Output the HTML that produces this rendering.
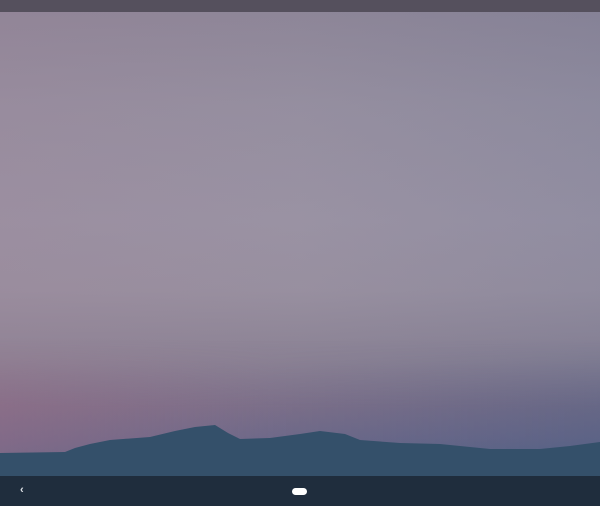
<!DOCTYPE html>
<html><head><meta charset="utf-8"><style>
html,body{margin:0;padding:0;width:600px;height:506px;overflow:hidden;background:#1f2d3d}
.top{position:absolute;left:0;top:0;width:600px;height:12px;background:#55505d}
.sky{position:absolute;left:0;top:12px;width:600px;height:464px;
background:
linear-gradient(90deg,rgba(160,130,150,0.25),rgba(150,130,150,0.05) 50%,rgba(80,100,140,0.12)),
linear-gradient(180deg,#8d8698 0%,#958fa0 20%,#9a93a4 45%,#9890a0 60%,#8a8294 75%,#7a6f88 85%,#6a6888 92%,#4f6284 100%);}
.bot{position:absolute;left:0;top:340px;width:600px;height:136px;
background:linear-gradient(90deg,rgba(150,100,130,0.35),rgba(120,100,140,0.1) 45%,rgba(70,90,130,0.3));
-webkit-mask-image:linear-gradient(180deg,transparent 0%,#000 50%,#000 100%);
mask-image:linear-gradient(180deg,transparent 0%,#000 50%,#000 100%);}
svg{position:absolute;left:0;top:0}
.nav{position:absolute;left:0;top:476px;width:600px;height:30px;background:#1f2d3d}
.pill{position:absolute;left:292px;top:488px;width:15px;height:7px;border-radius:4px;background:#fff}
.back{position:absolute;left:20px;top:484px;color:#dfe3e8;font:bold 11px "Liberation Sans",sans-serif}
</style></head><body>
<div class="top"></div>
<div class="sky"></div>
<div class="bot"></div>
<svg width="600" height="476" viewBox="0 0 600 476">
<path d="M0 453 L65 452 L75 448 L90 444 L110 440 L150 437 L175 431 L195 427 L215 425 L228 433 L240 439 L270 438 L300 434 L320 431 L345 434 L360 440 L400 443 L440 444 L470 447 L490 449 L540 449 L570 446 L600 442 L600 476 L0 476 Z" fill="#34506a"/>
</svg>
<div class="nav"></div>
<div class="back">‹</div>
<div class="pill"></div>
</body></html>
